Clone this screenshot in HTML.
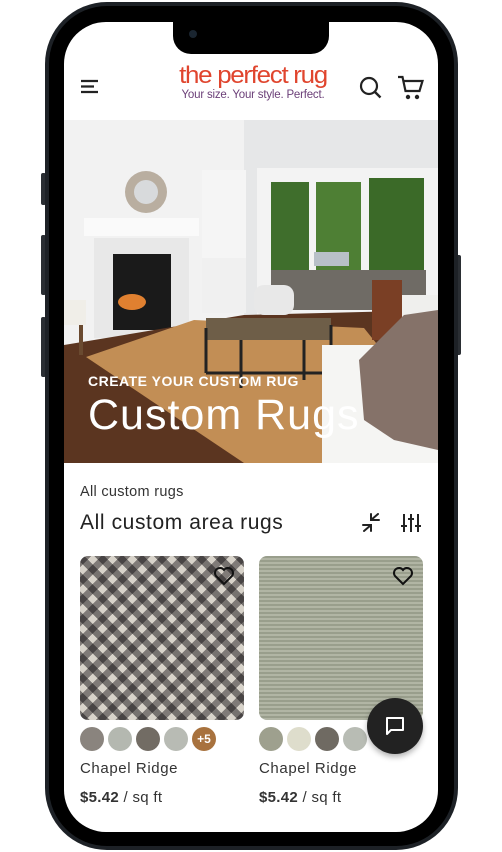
<!DOCTYPE html>
<html><head><meta charset="utf-8"><style>
*{margin:0;padding:0;box-sizing:border-box}
body{width:502px;height:852px;background:#fff;position:relative;overflow:hidden;font-family:"Liberation Sans",sans-serif}
.phone{position:absolute;left:45px;top:2px;width:413px;height:848px;background:#1d2126;border-radius:62px}
.phone:before{content:"";position:absolute;left:4px;top:4px;right:4px;bottom:4px;border-radius:58px;background:#000}
.btn{position:absolute;background:#2a2e33;width:5px;border-radius:2px}
.screen{position:absolute;left:64px;top:22px;width:374px;height:810px;background:#fff;border-radius:42px;overflow:hidden}
.notch{position:absolute;left:109px;top:0;width:156px;height:32px;background:#000;border-radius:0 0 18px 18px}
.hdr{position:absolute;top:0;left:0;width:374px;height:98px}
.logo{position:absolute;left:104px;top:42px;width:170px;text-align:center}
.l1{color:#e0452e;font-size:24px;letter-spacing:-1.2px;line-height:24px;font-weight:300;transform:scaleX(1.08)}
.l2{color:#6b3f78;font-size:11.5px;line-height:14px;letter-spacing:-.2px}
.hero{position:absolute;top:98px;left:0;width:374px;height:343px}
.ht1{position:absolute;left:24px;top:253px;color:#fff;font-size:14px;font-weight:bold;letter-spacing:.5px}
.ht2{position:absolute;left:24px;top:271px;color:#fff;font-size:43px;letter-spacing:1px}
.crumb{position:absolute;left:16px;top:462px;font-size:14.5px;color:#333;letter-spacing:.3px}
.title{position:absolute;left:16px;top:489px;font-size:21px;color:#222;letter-spacing:.6px}
.card{position:absolute;top:534px;width:164px;height:164px;border-radius:8px;overflow:hidden}
.sw{position:absolute;top:705px;width:24px;height:24px;border-radius:50%}
.name{position:absolute;top:738px;font-size:15px;color:#333;letter-spacing:.6px}
.price{position:absolute;top:767px;font-size:15px;color:#333;letter-spacing:.3px}
.fab{position:absolute;left:303px;top:676px;width:56px;height:56px;border-radius:50%;background:#222;box-shadow:0 3px 6px rgba(0,0,0,.3)}
</style></head><body>
<div class="btn" style="left:41px;top:173px;height:32px"></div>
<div class="btn" style="left:41px;top:235px;height:60px"></div>
<div class="btn" style="left:41px;top:317px;height:60px"></div>
<div class="btn" style="left:456px;top:255px;height:100px"></div>
<div class="phone"></div>
<div class="screen">
 <div class="notch"><div style="position:absolute;left:16px;top:8px;width:8px;height:8px;border-radius:50%;background:#1a2530"></div></div>
 <div class="hdr">
  <svg style="position:absolute;left:16px;top:57px" width="20" height="16" viewBox="0 0 20 16"><path d="M1 2h17M1 7.5h13M1 13h17" stroke="#222" stroke-width="2.2"/></svg>
  <div class="logo"><div class="l1">the perfect rug</div><div class="l2">Your size. Your style. Perfect.</div></div>
  <svg style="position:absolute;left:295px;top:54px" width="24" height="24" viewBox="0 0 24 24"><circle cx="10" cy="10" r="8" fill="none" stroke="#222" stroke-width="2.2"/><path d="M15.5 15.5l6 6" stroke="#222" stroke-width="2.4"/></svg>
  <svg style="position:absolute;left:333px;top:52px" width="28" height="28" viewBox="0 0 28 28"><path d="M1 3h4.5l3 14h14l3-10H7" fill="none" stroke="#222" stroke-width="2.2"/><circle cx="11" cy="23" r="2.2" fill="#222"/><circle cx="20" cy="23" r="2.2" fill="#222"/></svg>
 </div>
 <div class="hero">
  <svg width="374" height="343" viewBox="0 0 374 343">
   <rect width="374" height="343" fill="#e6e7e8"/>
   <rect x="0" y="0" width="180" height="225" fill="#f2f2f2"/>
   <rect x="30" y="118" width="95" height="100" fill="#e8e8e8"/>
   <rect x="20" y="98" width="115" height="18" fill="#fafafa"/>
   <circle cx="82" cy="72" r="21" fill="#b9aea0"/><circle cx="82" cy="72" r="12" fill="#d8dadc"/>
   <rect x="49" y="134" width="58" height="76" fill="#1a1a1a"/>
   <ellipse cx="68" cy="182" rx="14" ry="8" fill="#e08030"/>
   <rect x="138" y="50" width="44" height="90" fill="#f5f5f5"/>
   <rect x="138" y="138" width="44" height="55" fill="#f0f0f0"/>
   <rect x="193" y="48" width="181" height="152" fill="#f3f3f3"/>
   <rect x="207" y="62" width="38" height="125" fill="#3f6e2c"/>
   <rect x="252" y="62" width="45" height="125" fill="#4e7f34"/>
   <rect x="305" y="58" width="55" height="130" fill="#3b6a28"/>
   <rect x="207" y="150" width="155" height="40" fill="#6f6b65"/>
   <rect x="250" y="132" width="35" height="14" fill="#b8c0c8"/>
   <polygon points="0,225 180,195 374,190 374,343 0,343" fill="#5b3520"/>
   <polygon points="22,237 130,200 300,208 374,300 374,343 180,343" fill="#c28e55"/>
   <rect x="142" y="198" width="125" height="22" fill="#6e5e48"/>
   <path d="M142 208v45M267 205v45M177 220v48M240 220v40M142 253h120" stroke="#222" stroke-width="3" fill="none"/>
   <rect x="190" y="165" width="40" height="30" rx="10" fill="#e8e8e8"/>
   <rect x="0" y="180" width="22" height="25" fill="#f0eee8"/><rect x="15" y="205" width="4" height="30" fill="#6a4a30"/>
   <rect x="258" y="225" width="116" height="118" fill="#f5f5f3"/>
   <rect x="315" y="175" width="59" height="40" fill="#efefed"/>
   <rect x="308" y="160" width="30" height="60" fill="#7a3f25"/>
   <polygon points="295,240 340,195 374,190 374,330 330,320 300,300" fill="#857269"/>
  </svg>
  <div class="ht1">CREATE YOUR CUSTOM RUG</div>
  <div class="ht2">Custom Rugs</div>
 </div>
 <div class="crumb">All custom rugs</div>
 <div class="title">All custom area rugs</div>
 <svg style="position:absolute;left:297px;top:491px" width="20" height="20" viewBox="0 0 20 20"><path d="M2 12h8v6M10 12L3 18M18 7h-8V1M10 7l7-6" stroke="#222" stroke-width="2" fill="none" stroke-linecap="round"/></svg>
 <svg style="position:absolute;left:336px;top:491px" width="22" height="20" viewBox="0 0 22 20"><path d="M4 1v18M11 1v18M18 1v18M1 13h6M8 6h6M15 13h6" stroke="#222" stroke-width="2"/></svg>
 <div class="card" style="left:16px;background:repeating-linear-gradient(45deg,#4a4646 0 7px,#d6d1c8 7px 14px),#888"><div style="position:absolute;inset:0;background:repeating-linear-gradient(-45deg,rgba(70,66,66,.6) 0 7px,rgba(220,215,205,.3) 7px 14px)"></div></div>
 <div class="card" style="left:195px;background:#a6ab98"><div style="position:absolute;inset:0;background:repeating-linear-gradient(0deg,rgba(255,255,255,.12) 0 2px,rgba(0,0,0,.08) 2px 4px)"></div></div>
 <svg style="position:absolute;left:149px;top:544px" width="22" height="20" viewBox="0 0 22 20"><path d="M11 18L3 10a5 5 0 0 1 8-6 5 5 0 0 1 8 6z" fill="none" stroke="#111" stroke-width="2"/></svg>
 <svg style="position:absolute;left:328px;top:544px" width="22" height="20" viewBox="0 0 22 20"><path d="M11 18L3 10a5 5 0 0 1 8-6 5 5 0 0 1 8 6z" fill="none" stroke="#111" stroke-width="2"/></svg>
 <div class="sw" style="left:16px;background:#8a847e"></div>
 <div class="sw" style="left:44px;background:#b4b8b0"></div>
 <div class="sw" style="left:72px;background:#726c64"></div>
 <div class="sw" style="left:100px;background:#b8bbb4"></div>
 <div class="sw" style="left:128px;background:#a8723e;color:#fff;font-size:12px;font-weight:bold;text-align:center;line-height:24px">+5</div>
 <div class="sw" style="left:195px;background:#9ea08e"></div>
 <div class="sw" style="left:223px;background:#deddcc"></div>
 <div class="sw" style="left:251px;background:#6f6a62"></div>
 <div class="sw" style="left:279px;background:#b8bcb4"></div>
 <div class="name" style="left:16px">Chapel Ridge</div>
 <div class="name" style="left:195px">Chapel Ridge</div>
 <div class="price" style="left:16px"><b>$5.42</b> / sq ft</div>
 <div class="price" style="left:195px"><b>$5.42</b> / sq ft</div>
 <div class="fab"><svg style="position:absolute;left:17px;top:17px" width="22" height="22" viewBox="0 0 22 22"><path d="M3 3h16v12H7l-4 4z" fill="none" stroke="#fff" stroke-width="2" stroke-linejoin="round"/></svg></div>
</div>
</body></html>
